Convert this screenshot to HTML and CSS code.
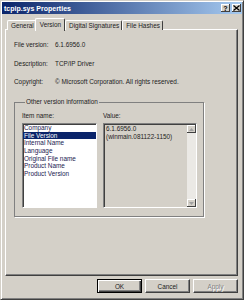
FILE: index.html
```html
<!DOCTYPE html>
<html lang="en">
<head>
  <meta charset="UTF-8">
  <title>tcpip.sys Properties</title>
  <link rel="stylesheet" href="styles.css">
</head>
<body>
  <div class="window">
    <div class="titlebar">
      <span class="title">tcpip.sys Properties</span>
      <div class="caption-btns">
        <span class="cap-btn help">?</span>
        <span class="cap-btn close">
          <svg width="7" height="6" viewBox="0 0 7 6"><path d="M0.5 0.5 L6.5 5.5 M6.5 0.5 L0.5 5.5" stroke="#000" stroke-width="1.2"/></svg>
        </span>
      </div>
    </div>

    <div class="body">
      <div class="tabs">
        <span class="tab">General</span>
        <span class="tab active">Version</span>
        <span class="tab">Digital Signatures</span>
        <span class="tab">File Hashes</span>
      </div>

      <div class="panel">
        <div class="fields">
          <span>File version:</span><span>6.1.6956.0</span>
          <span>Description:</span><span>TCP/IP Driver</span>
          <span>Copyright:</span><span>© Microsoft Corporation. All rights reserved.</span>
        </div>

        <fieldset class="group">
          <legend>Other version information</legend>
          <div class="cols">
            <div class="col items">
              <span class="col-label">Item name:</span>
              <ul class="listbox">
                <li>Company</li>
                <li class="selected">File Version</li>
                <li>Internal Name</li>
                <li>Language</li>
                <li>Original File name</li>
                <li>Product Name</li>
                <li>Product Version</li>
              </ul>
            </div>
            <div class="col values">
              <span class="col-label">Value:</span>
              <div class="valuebox">
                <div class="value-text">6.1.6956.0<br>(winmain.081122-1150)</div>
                <div class="scrollbar">
                  <span class="sb-btn"><svg width="5" height="3" viewBox="0 0 5 3"><path d="M0 3 L2.5 0 L5 3 Z" fill="#a0a0a0"/></svg></span>
                  <span class="sb-track"></span>
                  <span class="sb-btn"><svg width="5" height="3" viewBox="0 0 5 3"><path d="M0 0 L2.5 3 L5 0 Z" fill="#a0a0a0"/></svg></span>
                </div>
              </div>
            </div>
          </div>
        </fieldset>
      </div>

      <div class="buttons">
        <button class="default">OK</button>
        <button>Cancel</button>
        <button class="disabled">Apply</button>
      </div>
    </div>
  </div>
</body>
</html>
```

FILE: styles.css
```css
* { box-sizing: border-box; }
body { margin: 0; background: #d4d0c8; font-family: "Liberation Sans", Arial, sans-serif; font-size: 6.4px; color: #1c1c1c; }

.window { width: 244px; height: 300px; background: #d4d0c8; border: 1px solid; border-color: #d4d0c8 #404040 #404040 #d4d0c8; box-shadow: inset 1px 1px #fff, inset -1px -1px #808080; padding: 1px; display: flex; flex-direction: column; }

.titlebar { height: 12px; background: linear-gradient(to right, #0a246a, #a6caf0); display: flex; align-items: center; justify-content: space-between; padding: 0 1px 0 2px; }
.title { color: #fff; font-weight: bold; font-size: 7px; }
.caption-btns { display: flex; gap: 2px; }
.cap-btn { width: 9px; height: 8px; background: #d4d0c8; box-shadow: inset -1px -1px #404040, inset 1px 1px #fff; display: flex; align-items: center; justify-content: center; font-size: 7px; font-weight: bold; line-height: 1; color: #000; }

.body { flex: 1; padding: 0 4px 0 3px; display: flex; flex-direction: column; }

.tabs { display: flex; padding-left: 2px; margin-top: 3px; height: 13px; align-items: flex-end; position: relative; z-index: 1; }
.tab { height: 10px; line-height: 9px; padding: 0 2px 0 3px; border-top: 1px solid #fff; border-left: 1px solid #fff; border-right: 1px solid #404040; border-radius: 2px 2px 0 0; background: #d4d0c8; }
.tab.active { height: 13px; line-height: 11px; margin: 0 -1px -1px -2px; padding: 0 3px 0 4px; }
.tab.active + .tab { margin-left: 1px; }

.panel { height: 247px; border: 1px solid; border-color: #fff #404040 #404040 #fff; box-shadow: inset -1px -1px #808080; margin-top: -1px; padding: 11px 8px 0 8px; }

.fields { display: grid; grid-template-columns: 41px auto; row-gap: 10.5px; line-height: 8px; }

.group { margin: 12px 0 0 0; width: 190px; border: 1px solid #808080; box-shadow: 1px 1px 0 #fff; padding: 6px 6px 8px 7px; min-width: 0; }
.group legend { padding: 0 1px; margin-left: 3px; line-height: 8px; }

.cols { display: flex; gap: 6px; }
.col { display: flex; flex-direction: column; }
.items { width: 75px; }
.values { flex: 1; }
.col-label { line-height: 8px; margin-bottom: 3px; }

.listbox { list-style: none; margin: 0; padding: 0; height: 85px; background: #fff; border: 1px solid; border-color: #808080 #fff #fff #808080; box-shadow: inset 1px 1px #404040; }
.listbox li { height: 7.67px; line-height: 7.67px; padding-left: 1px; color: #1a1a50; }
.listbox li.selected { background: #0a246a; color: #fff; }

.valuebox { height: 85px; display: flex; border: 1px solid; border-color: #808080 #fff #fff #808080; box-shadow: inset 1px 1px #404040; background: #d4d0c8; }
.value-text { flex: 1; padding: 1px 0 0 2px; line-height: 7.5px; }
.scrollbar { width: 9px; display: flex; flex-direction: column; padding: 1px 0 0 0; }
.sb-btn { height: 8px; background: #d4d0c8; box-shadow: inset -1px -1px #404040, inset 1px 1px #fff; display: flex; align-items: center; justify-content: center; }
.sb-track { flex: 1; background: #ebe9e5; }

.buttons { display: flex; justify-content: flex-end; gap: 3px; margin-top: 3px; }
.buttons button { width: 45px; height: 14px; font-family: inherit; font-size: 6.4px; background: #d4d0c8; border: 1px solid; border-color: #fff #404040 #404040 #fff; box-shadow: inset -1px -1px #808080; padding: 0; margin: 0; color: #1c1c1c; }
.buttons button.default { border: 1px solid #000; box-shadow: inset 1px 1px #fff, inset -1px -1px #404040, inset -2px -2px #808080; }
.buttons button.disabled { color: #808080; text-shadow: 1px 1px 0 #fff; }
```
